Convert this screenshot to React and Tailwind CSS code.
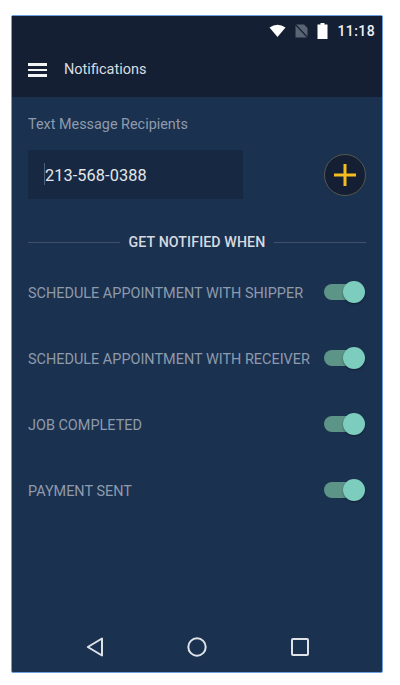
import React from "react";

const rows = [
  "SCHEDULE APPOINTMENT WITH SHIPPER",
  "SCHEDULE APPOINTMENT WITH RECEIVER",
  "JOB COMPLETED",
  "PAYMENT SENT",
];

function Toggle() {
  return (
    <div className="flex items-center w-[41px] h-[24px] mr-px relative shrink-0">
      <div className="w-[37px] h-[16px] rounded-full bg-[#5d9488]" />
      <div className="absolute right-0 top-px w-[22px] h-[22px] rounded-full bg-[#7dcdbf] shadow-[0_1px_2px_rgba(0,0,0,0.4)]" />
    </div>
  );
}

export default function App() {
  return (
    <div className="w-[400px] h-[685px] bg-white pt-[15px] pl-[11px] font-['Roboto',sans-serif] overflow-hidden">
      <div className="w-[372px] h-[658px] border-[1.5px] border-[#6b9fe0] rounded-[2px] bg-[#1b3150] flex flex-col">
        {/* header */}
        <div className="h-[81px] bg-[#141f33] shrink-0 flex flex-col">
          <div className="h-[27px] flex items-center justify-end gap-[9px] pr-[7px] pt-[2px]">
            <svg width="17" height="13" viewBox="0 0 17 13">
              <path d="M0.5 3.5 Q8.5 -2 16.5 3.5 L8.5 13 Z" fill="#ffffff" />
            </svg>
            <svg width="13" height="14" viewBox="0 0 13 14">
              <path d="M0.5 0.5 H9 L12.5 4 V13.5 H0.5 Z" fill="#5b6472" />
              <path d="M0 0 L13 14" stroke="#141f33" strokeWidth="1.2" />
            </svg>
            <svg width="11" height="16" viewBox="0 0 11 16">
              <path d="M3.5 0 H7.5 V1.5 H10.5 V16 H0.5 V1.5 H3.5 Z" fill="#ffffff" />
            </svg>
            <span className="text-[14px] leading-none font-medium tracking-[0.4px] text-[#eef0f3]">11:18</span>
          </div>
          <div className="flex-1 flex items-center pl-[16px]">
            <div className="w-[19px] flex flex-col gap-[3px]">
              <div className="h-[2.5px] bg-[#f2f3f5]" />
              <div className="h-[2.5px] bg-[#f2f3f5]" />
              <div className="h-[2.5px] bg-[#f2f3f5]" />
            </div>
            <span className="ml-[17px] text-[14.5px] text-[#d9dde2]">Notifications</span>
          </div>
        </div>

        {/* content */}
        <div className="flex-1 px-[16px] flex flex-col">
          <div className="mt-[19px] text-[14.4px] leading-[18px] text-[#8e9bac]">Text Message Recipients</div>
          <div className="mt-[16px] flex items-center justify-between">
            <div className="w-[215px] h-[49px] bg-[#172842] flex items-center pl-[17px] pt-[3px] relative">
              <div className="absolute left-[16px] top-[13px] w-px h-[22px] bg-[#4d5d75]" />
              <span className="text-[16.3px] tracking-[0.1px] text-[#e3e6ea]">213-568-0388</span>
            </div>
            <div className="w-[42px] h-[42px] rounded-full bg-[#141f33] border border-[#56574e] flex items-center justify-center">
              <svg width="24" height="24" viewBox="0 0 24 24">
                <path d="M12 1 V23 M1 12 H23" stroke="#f5bd1f" strokeWidth="3" />
              </svg>
            </div>
          </div>

          <div className="mt-[34px] flex items-center gap-[9px]">
            <div className="flex-1 h-px bg-[#414f68]" />
            <span className="text-[14.2px] leading-[18px] font-medium tracking-[0.1px] text-[#d6dae0]">GET NOTIFIED WHEN</span>
            <div className="flex-1 h-px bg-[#414f68]" />
          </div>

          <div className="mt-[29px] flex flex-col gap-[42px]">
            {rows.map((label) => (
              <div key={label} className="h-[24px] flex items-center justify-between">
                <span className="pt-[3px] text-[14.45px] text-[#8e9bac] whitespace-nowrap">{label}</span>
                <Toggle />
              </div>
            ))}
          </div>
        </div>

        {/* nav bar */}
        <div className="h-[52px] shrink-0 flex items-start pt-[17px] pl-[74px] gap-[84px]">
          <svg width="18" height="20" viewBox="0 0 18 20">
            <path d="M16 1.5 V18.5 L1.8 10 Z" fill="none" stroke="#dfe3e8" strokeWidth="2" strokeLinejoin="round" />
          </svg>
          <svg width="20" height="20" viewBox="0 0 20 20" className="-ml-px">
            <circle cx="10" cy="10" r="8.7" fill="none" stroke="#dfe3e8" strokeWidth="2" />
          </svg>
          <svg width="18" height="18" viewBox="0 0 18 18" className="mt-px">
            <rect x="1" y="1" width="16" height="16" rx="1" fill="none" stroke="#dfe3e8" strokeWidth="2" />
          </svg>
        </div>
      </div>
    </div>
  );
}
